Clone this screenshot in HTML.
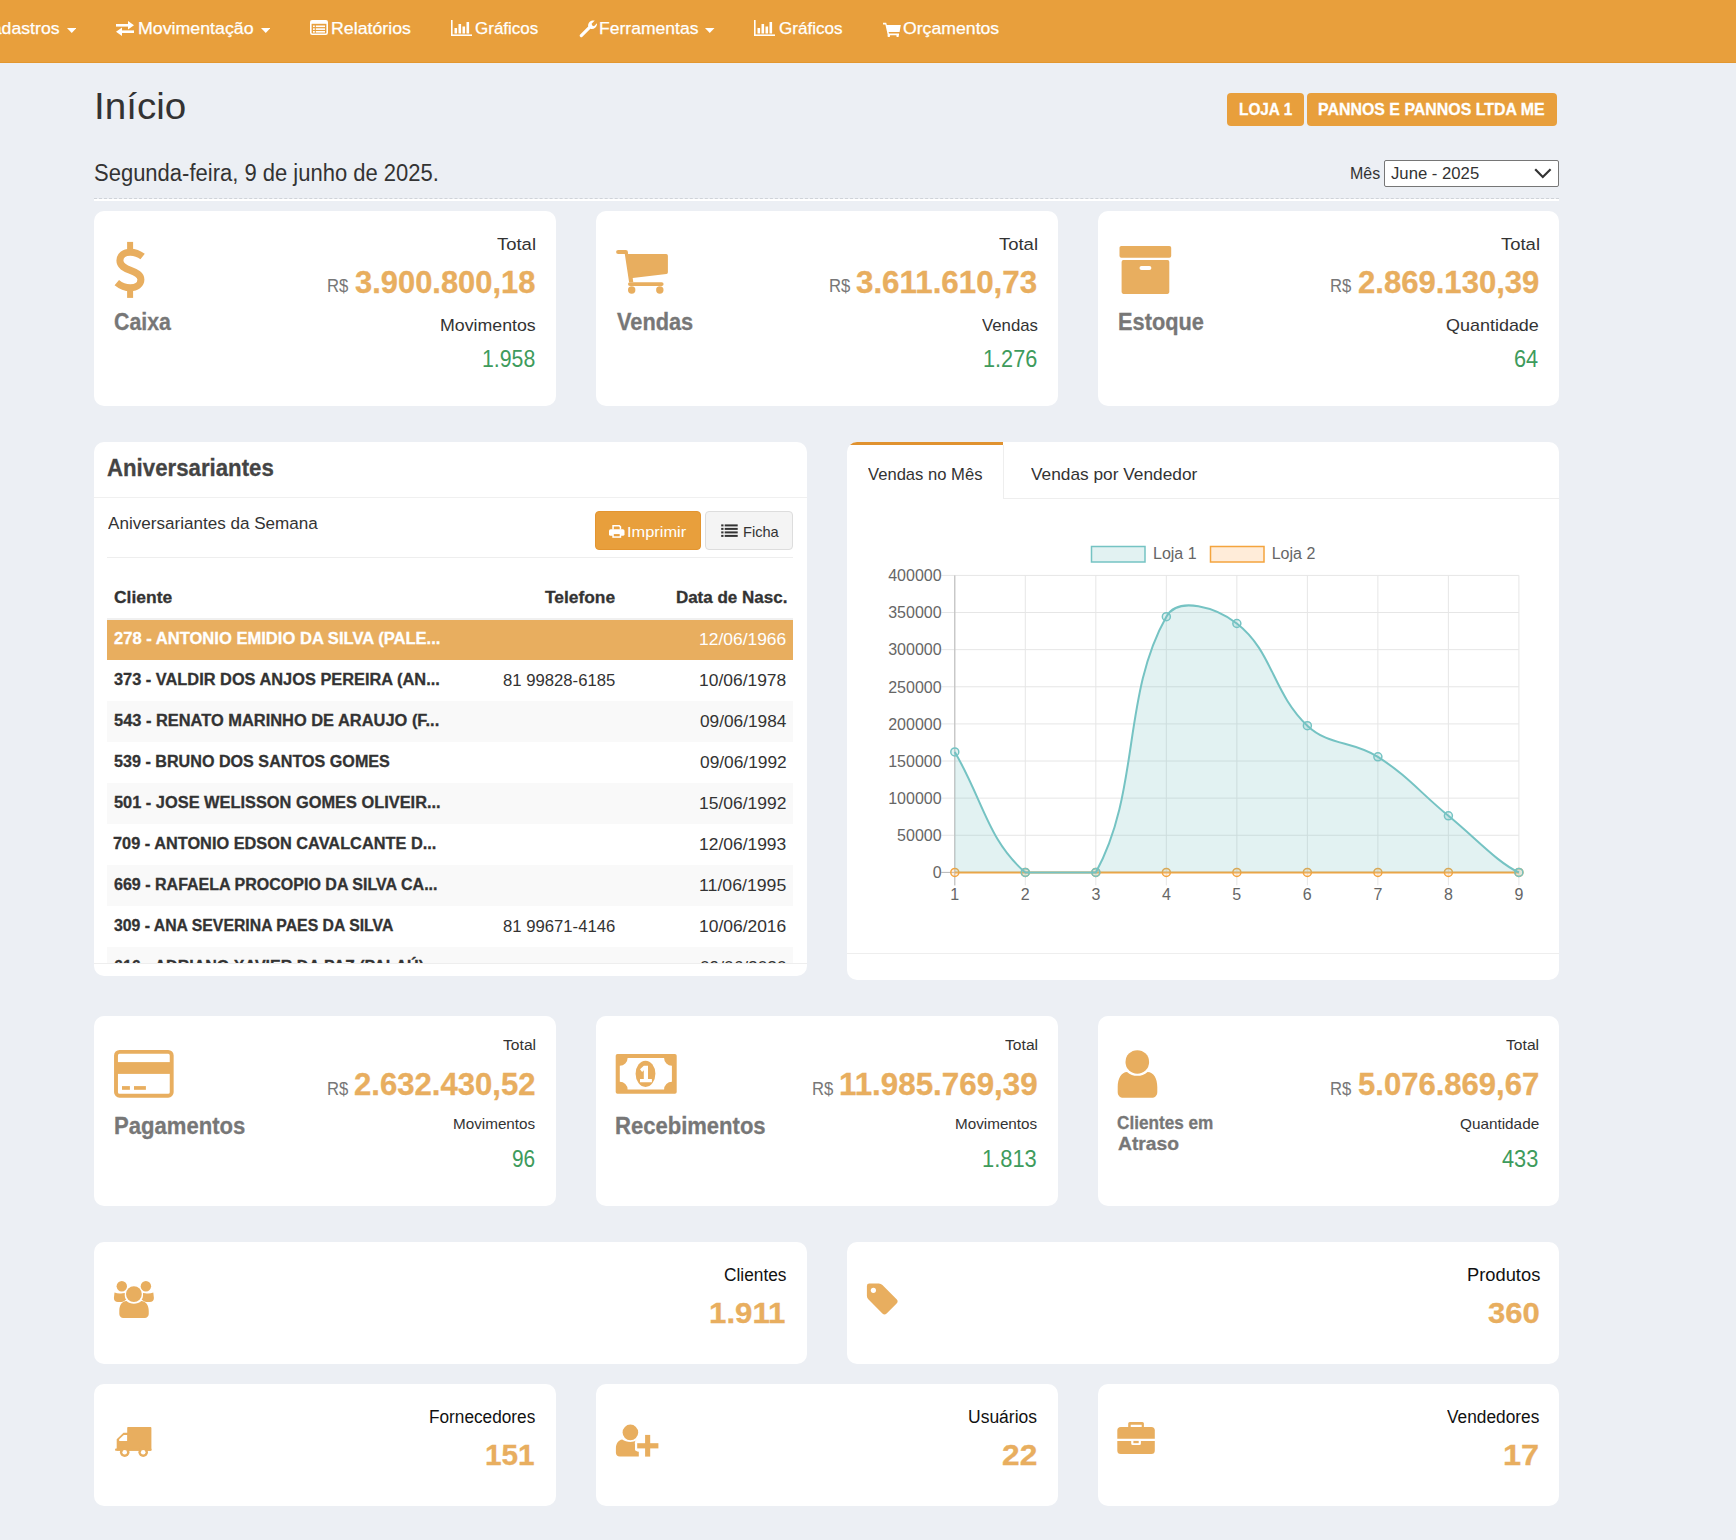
<!DOCTYPE html>
<html><head><meta charset="utf-8"><title>Início</title>
<style>
html,body{margin:0;padding:0;}
body{width:1736px;height:1540px;overflow:hidden;background:#ECEFF4;font-family:"Liberation Sans", sans-serif;position:relative;}
</style></head><body>
<div style="position:absolute;left:0px;top:0px;width:1736px;height:62px;background:#E89F3C;"></div><div style="position:absolute;left:0px;top:62px;width:1736px;height:1px;background:#E3972F;"></div><svg style="position:absolute;left:66.5px;top:28px;" width="9.5" height="5" viewBox="0 0 9.5 5"><polygon points="0,0 9.5,0 4.75,5" fill="#fff"/></svg><svg style="position:absolute;left:115px;top:21px;" width="20" height="15" viewBox="0 0 20 15"><g fill="#fff"><rect x="1" y="3" width="14" height="2.6"/><polygon points="13,0 19,4.3 13,8.6"/><rect x="5" y="9.4" width="14" height="2.6"/><polygon points="7,6.4 1,10.7 7,15"/></g></svg><svg style="position:absolute;left:260.5px;top:28px;" width="9.5" height="5" viewBox="0 0 9.5 5"><polygon points="0,0 9.5,0 4.75,5" fill="#fff"/></svg><svg style="position:absolute;left:310px;top:20px;" width="18" height="15" viewBox="0 0 18 15"><g fill="none" stroke="#fff" stroke-width="1.6"><rect x="0.8" y="0.8" width="16.4" height="13.4" rx="1.5"/></g><g fill="#fff"><rect x="0.8" y="0.8" width="16.4" height="3"/><rect x="3" y="5.5" width="1.8" height="1.6"/><rect x="3" y="8.3" width="1.8" height="1.6"/><rect x="3" y="11" width="1.8" height="1.6"/><rect x="5.8" y="5.5" width="9.2" height="1.6"/><rect x="5.8" y="8.3" width="9.2" height="1.6"/><rect x="5.8" y="11" width="9.2" height="1.6"/></g></svg><svg style="position:absolute;left:450.8px;top:20px;" width="21" height="16" viewBox="0 0 21 16"><g fill="#fff"><rect x="0" y="0" width="1.6" height="16"/><rect x="0" y="14.4" width="21" height="1.6"/><rect x="3.5" y="8" width="2.6" height="5.5"/><rect x="7.5" y="4" width="2.6" height="9.5"/><rect x="11.5" y="6.5" width="2.6" height="7"/><rect x="15.5" y="2" width="2.6" height="11.5"/></g></svg><svg style="position:absolute;left:579px;top:20px;" width="18" height="18" viewBox="0 0 18 18"><g fill="#fff"><path d="M1.2,14.6 L9.2,6.6 A5.2,5.2 0 0 1 15.8,0.6 L12.6,3.8 L13.2,5.6 L15,6.2 L18,3.2 A5.2,5.2 0 0 1 11.4,8.8 L3.4,16.8 A1.55,1.55 0 0 1 1.2,14.6 Z"/></g></svg><svg style="position:absolute;left:705px;top:28px;" width="9.5" height="5" viewBox="0 0 9.5 5"><polygon points="0,0 9.5,0 4.75,5" fill="#fff"/></svg><svg style="position:absolute;left:754px;top:20px;" width="21" height="16" viewBox="0 0 21 16"><g fill="#fff"><rect x="0" y="0" width="1.6" height="16"/><rect x="0" y="14.4" width="21" height="1.6"/><rect x="3.5" y="8" width="2.6" height="5.5"/><rect x="7.5" y="4" width="2.6" height="9.5"/><rect x="11.5" y="6.5" width="2.6" height="7"/><rect x="15.5" y="2" width="2.6" height="11.5"/></g></svg><svg style="position:absolute;left:882.5px;top:21.5px;" width="18" height="15" viewBox="0 0 18 15"><g fill="#fff"><path d="M0,0.8 h3.2 l0.6,2.2 h14 l-1.2,7 h-11 l0.4,1.6 h10 v1.6 h-11.2 l-2.4,-10.8 h-2.4 z"/><circle cx="5.8" cy="13.8" r="1.3"/><circle cx="14.6" cy="13.8" r="1.3"/></g></svg><div style="position:absolute;left:1227px;top:93px;width:77px;height:33px;background:#E89F3C;border-radius:4px"></div><div style="position:absolute;left:1307px;top:93px;width:250px;height:33px;background:#E89F3C;border-radius:4px"></div><div style="position:absolute;left:1384px;top:160px;width:173px;height:25px;border:1px solid #767676;border-radius:2px;background:#fff"></div><svg style="position:absolute;left:1534px;top:168px;" width="18" height="11" viewBox="0 0 18 11"><polyline points="1.2,1.2 8.8,9 16.6,1.2" fill="none" stroke="#333" stroke-width="2.2"/></svg><div style="position:absolute;left:94px;top:198px;width:1465px;height:0;border-top:1px dashed #cfd3d9"></div><div style="position:absolute;left:94px;top:199px;width:1465px;height:2px;background:#ffffff;"></div><div style="position:absolute;left:94px;top:211px;width:462px;height:195px;background:#fff;border-radius:10px"></div><div style="position:absolute;left:596px;top:211px;width:462px;height:195px;background:#fff;border-radius:10px"></div><div style="position:absolute;left:1098px;top:211px;width:461px;height:195px;background:#fff;border-radius:10px"></div><div style="position:absolute;left:94px;top:1016px;width:462px;height:190px;background:#fff;border-radius:10px"></div><div style="position:absolute;left:596px;top:1016px;width:462px;height:190px;background:#fff;border-radius:10px"></div><div style="position:absolute;left:1098px;top:1016px;width:461px;height:190px;background:#fff;border-radius:10px"></div><svg style="position:absolute;left:105px;top:235px;" width="80" height="70" viewBox="0 0 80 70"><g fill="#E8AE5F"><rect x="22.1" y="6.9" width="6" height="8"/><rect x="22.1" y="55" width="6" height="7.9"/></g><path d="M37.6,21.6 C33.8,18.6 29.6,17.2 25.3,17.2 C19.2,17.2 14.9,20.6 14.9,25.6 C14.9,31 19.5,33.2 25.5,35.4 C31.6,37.7 35.9,39.8 35.9,44.6 C35.9,49.6 31.5,52.8 25.3,52.8 C20.5,52.8 15.8,50.9 11.8,47.6" fill="none" stroke="#E8AE5F" stroke-width="7"/></svg><svg style="position:absolute;left:605px;top:240px;" width="80" height="60" viewBox="0 0 80 60"><g fill="#E8AE5F"><rect x="11.1" y="9.9" width="11.8" height="4.2" rx="2.1"/><path d="M19.5,12 L22.7,12 L23.1,14.1 H61.2 A1.7,1.7 0 0 1 62.9,15.8 V32.2 A1.7,1.7 0 0 1 61.4,33.9 L27.7,37.9 L28.3,42.3 H24.1 Z"/><rect x="23" y="42.2" width="35.6" height="3.8" rx="1.9"/><circle cx="26.7" cy="50" r="3.7"/><circle cx="54.8" cy="50" r="3.7"/></g></svg><svg style="position:absolute;left:1110px;top:235px;" width="70" height="65" viewBox="0 0 70 65"><g fill="#E8AE5F"><rect x="9.5" y="11" width="51.7" height="11.8" rx="1.8"/><rect x="11.6" y="25.1" width="47.7" height="33.8" rx="1.8"/></g><rect x="29.5" y="31" width="11.9" height="4" rx="2" fill="#fff"/></svg><svg style="position:absolute;left:105px;top:1040px;" width="80" height="65" viewBox="0 0 80 65"><rect x="11" y="11.9" width="55.7" height="43.8" rx="3.5" fill="none" stroke="#E8AE5F" stroke-width="3.9"/><g fill="#E8AE5F"><rect x="10" y="22.1" width="58" height="11.8"/><rect x="17" y="46.1" width="7.9" height="3.7"/><rect x="29" y="46.1" width="11.9" height="3.7"/></g></svg><svg style="position:absolute;left:605px;top:1045px;" width="80" height="55" viewBox="0 0 80 55"><path fill="#E8AE5F" fill-rule="evenodd" d="M12.5,9 h57.4 a1.8,1.8 0 0 1 1.8,1.8 v36.2 a1.8,1.8 0 0 1 -1.8,1.8 h-57.4 a1.8,1.8 0 0 1 -1.8,-1.8 v-36.2 a1.8,1.8 0 0 1 1.8,-1.8 z M22.6,13 a7.8,7.8 0 0 1 -7.8,7.8 v15.9 a7.8,7.8 0 0 1 7.8,7.8 h36.5 a7.8,7.8 0 0 1 7.8,-7.8 v-15.9 a7.8,7.8 0 0 1 -7.8,-7.8 z"/><ellipse cx="40.5" cy="28.8" rx="9.9" ry="13.1" fill="#E8AE5F"/><path fill="#fff" d="M35,24.2 l3.8,-3.5 h4.2 v13.3 h3.9 v3.2 h-11.9 v-3.2 h3.8 v-8.7 l-1.7,1.6 z"/></svg><svg style="position:absolute;left:1105px;top:1040px;" width="65" height="65" viewBox="0 0 65 65"><g fill="#E8AE5F"><circle cx="32.3" cy="21.95" r="11.8"/><path d="M22,31.9 C25,34.5 28.5,35.8 32.3,35.8 C36.1,35.8 39.6,34.5 42.6,31.9 C48.5,32.2 52.3,38 52.3,47 V52 C52.3,55.5 50,57.8 46.5,57.8 H18.5 C15,57.8 12.7,55.5 12.7,52 V47 C12.7,38 16.5,32.2 22,31.9 Z"/></g></svg><div style="position:absolute;left:94px;top:1242px;width:713px;height:122px;background:#fff;border-radius:10px"></div><div style="position:absolute;left:847px;top:1242px;width:712px;height:122px;background:#fff;border-radius:10px"></div><div style="position:absolute;left:94px;top:1384px;width:462px;height:122px;background:#fff;border-radius:10px"></div><div style="position:absolute;left:596px;top:1384px;width:462px;height:122px;background:#fff;border-radius:10px"></div><div style="position:absolute;left:1098px;top:1384px;width:461px;height:122px;background:#fff;border-radius:10px"></div><svg style="position:absolute;left:105px;top:1270px;" width="60" height="55" viewBox="0 0 60 55"><g fill="#E8AE5F"><circle cx="16.8" cy="16.25" r="5.2"/><circle cx="40.9" cy="16.25" r="5.2"/><path d="M9.5,22.4 C12,23.4 14.5,23.6 17.5,23.2 L19.8,23 C19.5,26.5 20.3,29 21.2,29.6 L20,30.6 C18.5,31.8 17,32.1 15,32.1 H13 C10.5,32.1 8.9,30.5 8.9,28 Z"/><path d="M48.3,22.4 C45.8,23.4 43.3,23.6 40.3,23.2 L38,23 C38.3,26.5 37.5,29 36.6,29.6 L37.8,30.6 C39.3,31.8 40.8,32.1 42.8,32.1 H44.8 C47.3,32.1 48.9,30.5 48.9,28 Z"/><circle cx="28.9" cy="24.1" r="7.9"/><path d="M21.5,31.1 C23.5,32.8 26,33.8 28.9,33.8 C31.8,33.8 34.3,32.8 36.3,31.1 C40.8,31.5 43.75,35 43.75,41 V44 C43.75,46.3 42,48 39.7,48 H18.3 C16,48 14.3,46.3 14.3,44 V41 C14.3,35 17,31.5 21.5,31.1 Z"/></g></svg><svg style="position:absolute;left:858px;top:1275px;" width="50" height="50" viewBox="0 0 50 50"><path fill="#E8AE5F" d="M8.9,11 a2.4,2.4 0 0 1 2.4,-2.4 h9.5 a5,5 0 0 1 3.6,1.5 l14.2,14.2 a3,3 0 0 1 0,4.2 l-10,10 a3,3 0 0 1 -4.2,0 l-14.1,-14.3 a5,5 0 0 1 -1.4,-3.5 z"/><circle cx="15.4" cy="15.3" r="2.6" fill="#fff"/></svg><svg style="position:absolute;left:90px;top:1390px;" width="80" height="80" viewBox="0 0 80 80"><g fill="#E8AE5F"><rect x="37.2" y="37.1" width="24.2" height="23.6" rx="0.8"/><path d="M26.7,60.7 V49.2 L33.5,42.7 H39 V60.7 Z"/><rect x="25.2" y="58.6" width="36.2" height="2.2" rx="0.6"/><circle cx="34.7" cy="62.2" r="4.8"/><circle cx="53.2" cy="62.2" r="4.8"/></g><g fill="#fff"><path d="M29.2,50.9 V49.3 L33.8,44.9 H37.1 V50.9 Z"/><circle cx="34.7" cy="62.2" r="2.3"/><circle cx="53.2" cy="62.2" r="2.3"/></g></svg><svg style="position:absolute;left:590px;top:1390px;" width="80" height="80" viewBox="0 0 80 80"><g fill="#E8AE5F"><circle cx="40.4" cy="42.4" r="7.8"/><path d="M32.2,49.6 C34.4,51.2 37.2,52 40.4,52 C42.6,52 44.8,51.5 46.6,50.6 C44.2,51.6 45,53.5 45,54.5 V58.8 C45,60.6 46.4,61.6 48.8,61.8 V66.6 H29.8 C27.5,66.6 25.9,65 25.9,62.8 V58.5 C25.9,53.5 28.5,50.2 32.2,49.6 Z"/></g><g fill="#fff"><rect x="45.2" y="51.2" width="25" height="9.2"/><rect x="53.1" y="42.9" width="9.1" height="25.7"/></g><g fill="#E8AE5F"><rect x="47.2" y="53.2" width="21.2" height="5.2"/><rect x="55.1" y="44.9" width="5.1" height="21.7"/></g></svg><svg style="position:absolute;left:1090px;top:1390px;" width="80" height="80" viewBox="0 0 80 80"><g fill="#E8AE5F"><path fill-rule="evenodd" d="M38.2,33.4 A1.5,1.5 0 0 1 39.7,31.9 H52.4 A1.5,1.5 0 0 1 53.9,33.4 V37.4 H51.7 V34.7 H40.7 V37.4 H38.2 Z"/><path d="M27.3,40.6 A3.5,3.5 0 0 1 30.8,37.1 H61.3 A3.5,3.5 0 0 1 64.8,40.6 V48.7 H27.3 Z"/><path d="M27.3,50.9 H41.2 V53.6 A1.5,1.5 0 0 0 42.7,55.1 H49.4 A1.5,1.5 0 0 0 50.9,53.6 V50.9 H64.8 V60.5 A3.5,3.5 0 0 1 61.3,64 H30.8 A3.5,3.5 0 0 1 27.3,60.5 Z"/><rect x="43.4" y="50.9" width="5.3" height="2.3"/></g></svg><div style="position:absolute;left:94px;top:442px;width:713px;height:534px;background:#fff;border-radius:10px;overflow:hidden"></div><div style="position:absolute;left:94px;top:497px;width:713px;height:1px;background:#f0f0f0;"></div><div style="position:absolute;left:595px;top:511px;width:104px;height:37px;background:#E89F3C;border:1px solid #E39530;border-radius:4px"></div><svg style="position:absolute;left:609px;top:525px;" width="16" height="13" viewBox="0 0 16 13"><g fill="#fff"><path d="M3.3,0 H10.6 L12.2,1.6 V4.6 H10.7 V2.2 L10,1.5 H4.8 V4.6 H3.3 Z"/><rect x="0" y="4.2" width="15.5" height="6.6" rx="1.6"/><rect x="3.3" y="7.6" width="8.9" height="5.2"/></g><rect x="4.8" y="9.1" width="5.9" height="2.2" fill="#E89F3C"/></svg><div style="position:absolute;left:705px;top:511px;width:86px;height:37px;background:#f4f4f4;border:1px solid #ddd;border-radius:4px"></div><svg style="position:absolute;left:721px;top:524px;" width="17" height="13" viewBox="0 0 17 13"><g fill="#333"><rect x="0.2" y="0.4" width="2.3" height="2"/><rect x="0.2" y="3.9" width="2.3" height="2"/><rect x="0.2" y="7.4" width="2.3" height="2"/><rect x="0.2" y="10.9" width="2.3" height="2"/><rect x="3.7" y="0.4" width="13" height="2"/><rect x="3.7" y="3.9" width="13" height="2"/><rect x="3.7" y="7.4" width="13" height="2"/><rect x="3.7" y="10.9" width="13" height="2"/></g></svg><div style="position:absolute;left:107px;top:557px;width:686px;height:1px;background:#eeeeee;"></div><div style="position:absolute;left:107px;top:618px;width:686px;height:2px;background:#f0f0f0;"></div><div style="position:absolute;left:107px;top:620px;width:686px;height:344px;overflow:hidden"><div style="position:absolute;left:0;top:0px;width:686px;height:40px;background:#E8AE5F"></div><div style="position:absolute;left:0;top:40px;width:686px;height:41px;background:#fff"></div><div style="position:absolute;left:0;top:81px;width:686px;height:41px;background:#f9f9f9"></div><div style="position:absolute;left:0;top:122px;width:686px;height:41px;background:#fff"></div><div style="position:absolute;left:0;top:163px;width:686px;height:41px;background:#f9f9f9"></div><div style="position:absolute;left:0;top:204px;width:686px;height:41px;background:#fff"></div><div style="position:absolute;left:0;top:245px;width:686px;height:41px;background:#f9f9f9"></div><div style="position:absolute;left:0;top:286px;width:686px;height:41px;background:#fff"></div><div style="position:absolute;left:0;top:327px;width:686px;height:41px;background:#f9f9f9"></div><div style="position:absolute;left:6.60px;top:11.20px;font-size:16.8px;line-height:16.8px;font-weight:700;color:#fff;white-space:nowrap;transform:scaleX(0.9871);transform-origin:0 0;-webkit-text-stroke:0.3px #fff;">278 - ANTONIO EMIDIO DA SILVA (PALE...</div><div style="position:absolute;left:592.38px;top:10.70px;font-size:17px;line-height:17px;font-weight:400;color:#fff;white-space:nowrap;transform:scaleX(1.0255);transform-origin:0 0;">12/06/1966</div><div style="position:absolute;left:6.77px;top:52.20px;font-size:16.8px;line-height:16.8px;font-weight:700;color:#333333;white-space:nowrap;transform:scaleX(0.9750);transform-origin:0 0;-webkit-text-stroke:0.3px #333333;">373 - VALDIR DOS ANJOS PEREIRA (AN...</div><div style="position:absolute;left:396.33px;top:51.70px;font-size:17px;line-height:17px;font-weight:400;color:#333333;white-space:nowrap;transform:scaleX(0.9815);transform-origin:0 0;">81 99828-6185</div><div style="position:absolute;left:592.38px;top:51.70px;font-size:17px;line-height:17px;font-weight:400;color:#333333;white-space:nowrap;transform:scaleX(1.0255);transform-origin:0 0;">10/06/1978</div><div style="position:absolute;left:6.61px;top:93.20px;font-size:16.8px;line-height:16.8px;font-weight:700;color:#333333;white-space:nowrap;transform:scaleX(0.9780);transform-origin:0 0;-webkit-text-stroke:0.3px #333333;">543 - RENATO MARINHO DE ARAUJO (F...</div><div style="position:absolute;left:593.08px;top:92.70px;font-size:17px;line-height:17px;font-weight:400;color:#333333;white-space:nowrap;transform:scaleX(1.0151);transform-origin:0 0;">09/06/1984</div><div style="position:absolute;left:6.62px;top:134.20px;font-size:16.8px;line-height:16.8px;font-weight:700;color:#333333;white-space:nowrap;transform:scaleX(0.9616);transform-origin:0 0;-webkit-text-stroke:0.3px #333333;">539 - BRUNO DOS SANTOS GOMES</div><div style="position:absolute;left:593.08px;top:133.70px;font-size:17px;line-height:17px;font-weight:400;color:#333333;white-space:nowrap;transform:scaleX(1.0192);transform-origin:0 0;">09/06/1992</div><div style="position:absolute;left:6.61px;top:175.20px;font-size:16.8px;line-height:16.8px;font-weight:700;color:#333333;white-space:nowrap;transform:scaleX(0.9757);transform-origin:0 0;-webkit-text-stroke:0.3px #333333;">501 - JOSE WELISSON GOMES OLIVEIR...</div><div style="position:absolute;left:592.38px;top:174.70px;font-size:17px;line-height:17px;font-weight:400;color:#333333;white-space:nowrap;transform:scaleX(1.0276);transform-origin:0 0;">15/06/1992</div><div style="position:absolute;left:6.45px;top:216.20px;font-size:16.8px;line-height:16.8px;font-weight:700;color:#333333;white-space:nowrap;transform:scaleX(0.9731);transform-origin:0 0;-webkit-text-stroke:0.3px #333333;">709 - ANTONIO EDSON CAVALCANTE D...</div><div style="position:absolute;left:592.38px;top:215.70px;font-size:17px;line-height:17px;font-weight:400;color:#333333;white-space:nowrap;transform:scaleX(1.0255);transform-origin:0 0;">12/06/1993</div><div style="position:absolute;left:6.62px;top:257.20px;font-size:16.8px;line-height:16.8px;font-weight:700;color:#333333;white-space:nowrap;transform:scaleX(0.9550);transform-origin:0 0;-webkit-text-stroke:0.3px #333333;">669 - RAFAELA PROCOPIO DA SILVA CA...</div><div style="position:absolute;left:592.36px;top:256.70px;font-size:17px;line-height:17px;font-weight:400;color:#333333;white-space:nowrap;transform:scaleX(1.0413);transform-origin:0 0;">11/06/1995</div><div style="position:absolute;left:6.78px;top:298.20px;font-size:16.8px;line-height:16.8px;font-weight:700;color:#333333;white-space:nowrap;transform:scaleX(0.9410);transform-origin:0 0;-webkit-text-stroke:0.3px #333333;">309 - ANA SEVERINA PAES DA SILVA</div><div style="position:absolute;left:396.33px;top:297.70px;font-size:17px;line-height:17px;font-weight:400;color:#333333;white-space:nowrap;transform:scaleX(0.9815);transform-origin:0 0;">81 99671-4146</div><div style="position:absolute;left:592.38px;top:297.70px;font-size:17px;line-height:17px;font-weight:400;color:#333333;white-space:nowrap;transform:scaleX(1.0255);transform-origin:0 0;">10/06/2016</div><div style="position:absolute;left:6.62px;top:339.20px;font-size:16.8px;line-height:16.8px;font-weight:700;color:#333333;white-space:nowrap;transform:scaleX(0.9565);transform-origin:0 0;-webkit-text-stroke:0.3px #333333;">616 - ADRIANO XAVIER DA PAZ (PALAÚ)</div><div style="position:absolute;left:593.08px;top:338.70px;font-size:17px;line-height:17px;font-weight:400;color:#333333;white-space:nowrap;transform:scaleX(1.0172);transform-origin:0 0;">09/06/2020</div></div><div style="position:absolute;left:94px;top:963px;width:713px;height:1px;background:#eeeeee;"></div><div style="position:absolute;left:847px;top:442px;width:712px;height:538px;background:#fff;border-radius:10px;overflow:hidden"><div style="position:absolute;left:0;top:0;width:156px;height:3px;background:#E0922F"></div></div><div style="position:absolute;left:1003px;top:445px;width:1px;height:54px;background:#eeeeee;"></div><div style="position:absolute;left:1003px;top:498px;width:556px;height:1px;background:#eeeeee;"></div><div style="position:absolute;left:847px;top:953px;width:712px;height:1px;background:#eeeeee;"></div><svg style="position:absolute;left:0;top:0" width="1736" height="1540" viewBox="0 0 1736 1540"><line x1="941.3" y1="575.40" x2="1518.9" y2="575.40" stroke="#e6e6e6" stroke-width="1"/><line x1="941.3" y1="612.52" x2="1518.9" y2="612.52" stroke="#e6e6e6" stroke-width="1"/><line x1="941.3" y1="649.65" x2="1518.9" y2="649.65" stroke="#e6e6e6" stroke-width="1"/><line x1="941.3" y1="686.77" x2="1518.9" y2="686.77" stroke="#e6e6e6" stroke-width="1"/><line x1="941.3" y1="723.90" x2="1518.9" y2="723.90" stroke="#e6e6e6" stroke-width="1"/><line x1="941.3" y1="761.02" x2="1518.9" y2="761.02" stroke="#e6e6e6" stroke-width="1"/><line x1="941.3" y1="798.15" x2="1518.9" y2="798.15" stroke="#e6e6e6" stroke-width="1"/><line x1="941.3" y1="835.27" x2="1518.9" y2="835.27" stroke="#e6e6e6" stroke-width="1"/><line x1="941.3" y1="872.40" x2="1518.9" y2="872.40" stroke="#e6e6e6" stroke-width="1"/><line x1="954.80" y1="575.4" x2="954.80" y2="885.4" stroke="#e6e6e6" stroke-width="1"/><line x1="1025.31" y1="575.4" x2="1025.31" y2="885.4" stroke="#e6e6e6" stroke-width="1"/><line x1="1095.83" y1="575.4" x2="1095.83" y2="885.4" stroke="#e6e6e6" stroke-width="1"/><line x1="1166.34" y1="575.4" x2="1166.34" y2="885.4" stroke="#e6e6e6" stroke-width="1"/><line x1="1236.85" y1="575.4" x2="1236.85" y2="885.4" stroke="#e6e6e6" stroke-width="1"/><line x1="1307.36" y1="575.4" x2="1307.36" y2="885.4" stroke="#e6e6e6" stroke-width="1"/><line x1="1377.88" y1="575.4" x2="1377.88" y2="885.4" stroke="#e6e6e6" stroke-width="1"/><line x1="1448.39" y1="575.4" x2="1448.39" y2="885.4" stroke="#e6e6e6" stroke-width="1"/><line x1="1518.90" y1="575.4" x2="1518.90" y2="885.4" stroke="#e6e6e6" stroke-width="1"/><line x1="954.8" y1="575.4" x2="954.8" y2="885.4" stroke="#b8b8b8" stroke-width="1"/><line x1="941.3" y1="872.4" x2="1518.9" y2="872.4" stroke="#b8b8b8" stroke-width="1"/><line x1="954.8" y1="872.4" x2="1518.9" y2="872.4" stroke="#F4A43E" stroke-width="2"/><circle cx="954.80" cy="872.4" r="4" fill="rgba(255,200,140,0.25)" stroke="#F4A43E" stroke-width="1.5"/><circle cx="1025.31" cy="872.4" r="4" fill="rgba(255,200,140,0.25)" stroke="#F4A43E" stroke-width="1.5"/><circle cx="1095.83" cy="872.4" r="4" fill="rgba(255,200,140,0.25)" stroke="#F4A43E" stroke-width="1.5"/><circle cx="1166.34" cy="872.4" r="4" fill="rgba(255,200,140,0.25)" stroke="#F4A43E" stroke-width="1.5"/><circle cx="1236.85" cy="872.4" r="4" fill="rgba(255,200,140,0.25)" stroke="#F4A43E" stroke-width="1.5"/><circle cx="1307.36" cy="872.4" r="4" fill="rgba(255,200,140,0.25)" stroke="#F4A43E" stroke-width="1.5"/><circle cx="1377.88" cy="872.4" r="4" fill="rgba(255,200,140,0.25)" stroke="#F4A43E" stroke-width="1.5"/><circle cx="1448.39" cy="872.4" r="4" fill="rgba(255,200,140,0.25)" stroke="#F4A43E" stroke-width="1.5"/><circle cx="1518.90" cy="872.4" r="4" fill="rgba(255,200,140,0.25)" stroke="#F4A43E" stroke-width="1.5"/><path d="M954.80,751.97 C983.00,800.14 987.84,840.40 1025.31,872.40 C1044.25,872.40 1083.98,872.40 1095.83,872.40 C1140.39,791.59 1121.82,695.25 1166.34,616.68 C1178.23,595.70 1216.35,607.67 1236.85,623.51 C1272.76,651.27 1272.56,692.78 1307.36,725.68 C1328.97,746.12 1352.14,740.42 1377.88,756.87 C1408.55,776.47 1419.95,792.52 1448.39,815.82 C1476.36,838.74 1498.00,863.00 1518.90,872.40 L1518.9,872.4 L954.8,872.4 Z" fill="rgba(108,192,192,0.2)"/><path d="M954.80,751.97 C983.00,800.14 987.84,840.40 1025.31,872.40 C1044.25,872.40 1083.98,872.40 1095.83,872.40 C1140.39,791.59 1121.82,695.25 1166.34,616.68 C1178.23,595.70 1216.35,607.67 1236.85,623.51 C1272.76,651.27 1272.56,692.78 1307.36,725.68 C1328.97,746.12 1352.14,740.42 1377.88,756.87 C1408.55,776.47 1419.95,792.52 1448.39,815.82 C1476.36,838.74 1498.00,863.00 1518.90,872.40" fill="none" stroke="#75C3C3" stroke-width="2"/><circle cx="954.80" cy="751.97" r="4" fill="rgba(108,192,192,0.2)" stroke="#75C3C3" stroke-width="1.5"/><circle cx="1025.31" cy="872.40" r="4" fill="rgba(108,192,192,0.2)" stroke="#75C3C3" stroke-width="1.5"/><circle cx="1095.83" cy="872.40" r="4" fill="rgba(108,192,192,0.2)" stroke="#75C3C3" stroke-width="1.5"/><circle cx="1166.34" cy="616.68" r="4" fill="rgba(108,192,192,0.2)" stroke="#75C3C3" stroke-width="1.5"/><circle cx="1236.85" cy="623.51" r="4" fill="rgba(108,192,192,0.2)" stroke="#75C3C3" stroke-width="1.5"/><circle cx="1307.36" cy="725.68" r="4" fill="rgba(108,192,192,0.2)" stroke="#75C3C3" stroke-width="1.5"/><circle cx="1377.88" cy="756.87" r="4" fill="rgba(108,192,192,0.2)" stroke="#75C3C3" stroke-width="1.5"/><circle cx="1448.39" cy="815.82" r="4" fill="rgba(108,192,192,0.2)" stroke="#75C3C3" stroke-width="1.5"/><circle cx="1518.90" cy="872.40" r="4" fill="rgba(108,192,192,0.2)" stroke="#75C3C3" stroke-width="1.5"/><rect x="1091.5" y="546.5" width="53.5" height="15.5" fill="rgba(108,192,192,0.2)" stroke="#75C3C3" stroke-width="1.5"/><rect x="1210.5" y="546.5" width="53.5" height="15.5" fill="rgba(255,159,64,0.2)" stroke="#F4A43E" stroke-width="1.5"/></svg>
<div style="position:absolute;left:-21.28px;top:21.20px;font-size:16.9px;line-height:16.9px;font-weight:400;color:#fff;white-space:nowrap;transform:scaleX(1.0466);transform-origin:0 0;-webkit-text-stroke:0.25px #fff;">Cadastros</div><div style="position:absolute;left:137.58px;top:21.20px;font-size:16.9px;line-height:16.9px;font-weight:400;color:#fff;white-space:nowrap;transform:scaleX(1.0525);transform-origin:0 0;-webkit-text-stroke:0.25px #fff;">Movimentação</div><div style="position:absolute;left:330.88px;top:21.20px;font-size:16.9px;line-height:16.9px;font-weight:400;color:#fff;white-space:nowrap;transform:scaleX(1.0522);transform-origin:0 0;-webkit-text-stroke:0.25px #fff;">Relatórios</div><div style="position:absolute;left:475.45px;top:21.20px;font-size:16.9px;line-height:16.9px;font-weight:400;color:#fff;white-space:nowrap;transform:scaleX(1.0070);transform-origin:0 0;-webkit-text-stroke:0.25px #fff;">Gráficos</div><div style="position:absolute;left:598.60px;top:21.20px;font-size:16.9px;line-height:16.9px;font-weight:400;color:#fff;white-space:nowrap;transform:scaleX(1.0390);transform-origin:0 0;-webkit-text-stroke:0.25px #fff;">Ferramentas</div><div style="position:absolute;left:778.84px;top:21.20px;font-size:16.9px;line-height:16.9px;font-weight:400;color:#fff;white-space:nowrap;transform:scaleX(1.0119);transform-origin:0 0;-webkit-text-stroke:0.25px #fff;">Gráficos</div><div style="position:absolute;left:903.29px;top:21.20px;font-size:16.9px;line-height:16.9px;font-weight:400;color:#fff;white-space:nowrap;transform:scaleX(1.0456);transform-origin:0 0;-webkit-text-stroke:0.25px #fff;">Orçamentos</div><div style="position:absolute;left:93.53px;top:87.80px;font-size:37.4px;line-height:37.4px;font-weight:400;color:#333333;white-space:nowrap;transform:scaleX(1.0322);transform-origin:0 0;">Início</div><div style="position:absolute;left:1238.58px;top:101.00px;font-size:17.3px;line-height:17.3px;font-weight:700;color:#fff;white-space:nowrap;transform:scaleX(0.8887);transform-origin:0 0;-webkit-text-stroke:0.3px #fff;">LOJA 1</div><div style="position:absolute;left:1318.04px;top:101.00px;font-size:17.3px;line-height:17.3px;font-weight:700;color:#fff;white-space:nowrap;transform:scaleX(0.9212);transform-origin:0 0;-webkit-text-stroke:0.3px #fff;">PANNOS E PANNOS LTDA ME</div><div style="position:absolute;left:93.72px;top:162.10px;font-size:23px;line-height:23px;font-weight:400;color:#333333;white-space:nowrap;transform:scaleX(0.9564);transform-origin:0 0;">Segunda-feira, 9 de junho de 2025.</div><div style="position:absolute;left:1350.02px;top:165.40px;font-size:17px;line-height:17px;font-weight:400;color:#333333;white-space:nowrap;transform:scaleX(0.9390);transform-origin:0 0;">Mês</div><div style="position:absolute;left:1390.83px;top:165.40px;font-size:17px;line-height:17px;font-weight:400;color:#333333;white-space:nowrap;transform:scaleX(0.9820);transform-origin:0 0;">June - 2025</div><div style="position:absolute;left:497.33px;top:235.60px;font-size:17.2px;line-height:17.2px;font-weight:400;color:#333333;white-space:nowrap;transform:scaleX(1.0739);transform-origin:0 0;">Total</div><div style="position:absolute;left:327.47px;top:276.40px;font-size:19px;line-height:19px;font-weight:400;color:#777777;white-space:nowrap;transform:scaleX(0.8771);transform-origin:0 0;">R$</div><div style="position:absolute;left:354.98px;top:267.30px;font-size:30.5px;line-height:30.5px;font-weight:700;color:#E8AE5F;white-space:nowrap;transform:scaleX(1.0131);transform-origin:0 0;-webkit-text-stroke:0.3px #E8AE5F;">3.900.800,18</div><div style="position:absolute;left:439.98px;top:317.90px;font-size:16.6px;line-height:16.6px;font-weight:400;color:#333333;white-space:nowrap;transform:scaleX(1.0701);transform-origin:0 0;">Movimentos</div><div style="position:absolute;left:482.21px;top:348.00px;font-size:23px;line-height:23px;font-weight:400;color:#3E9B5C;white-space:nowrap;transform:scaleX(0.9253);transform-origin:0 0;">1.958</div><div style="position:absolute;left:114.15px;top:311.30px;font-size:23px;line-height:23px;font-weight:700;color:#777777;white-space:nowrap;transform:scaleX(0.9280);transform-origin:0 0;-webkit-text-stroke:0.3px #777777;">Caixa</div><div style="position:absolute;left:999.13px;top:235.60px;font-size:17.2px;line-height:17.2px;font-weight:400;color:#333333;white-space:nowrap;transform:scaleX(1.0739);transform-origin:0 0;">Total</div><div style="position:absolute;left:828.67px;top:276.40px;font-size:19px;line-height:19px;font-weight:400;color:#777777;white-space:nowrap;transform:scaleX(0.8771);transform-origin:0 0;">R$</div><div style="position:absolute;left:856.37px;top:267.30px;font-size:30.5px;line-height:30.5px;font-weight:700;color:#E8AE5F;white-space:nowrap;transform:scaleX(1.0270);transform-origin:0 0;-webkit-text-stroke:0.3px #E8AE5F;">3.611.610,73</div><div style="position:absolute;left:981.50px;top:317.90px;font-size:16.6px;line-height:16.6px;font-weight:400;color:#333333;white-space:nowrap;transform:scaleX(1.0112);transform-origin:0 0;">Vendas</div><div style="position:absolute;left:982.98px;top:348.00px;font-size:23px;line-height:23px;font-weight:400;color:#3E9B5C;white-space:nowrap;transform:scaleX(0.9435);transform-origin:0 0;">1.276</div><div style="position:absolute;left:617.00px;top:311.30px;font-size:23px;line-height:23px;font-weight:700;color:#777777;white-space:nowrap;transform:scaleX(0.9459);transform-origin:0 0;-webkit-text-stroke:0.3px #777777;">Vendas</div><div style="position:absolute;left:1500.63px;top:235.60px;font-size:17.2px;line-height:17.2px;font-weight:400;color:#333333;white-space:nowrap;transform:scaleX(1.0739);transform-origin:0 0;">Total</div><div style="position:absolute;left:1330.27px;top:276.40px;font-size:19px;line-height:19px;font-weight:400;color:#777777;white-space:nowrap;transform:scaleX(0.8771);transform-origin:0 0;">R$</div><div style="position:absolute;left:1357.67px;top:267.30px;font-size:30.5px;line-height:30.5px;font-weight:700;color:#E8AE5F;white-space:nowrap;transform:scaleX(1.0184);transform-origin:0 0;-webkit-text-stroke:0.3px #E8AE5F;">2.869.130,39</div><div style="position:absolute;left:1446.28px;top:317.90px;font-size:16.6px;line-height:16.6px;font-weight:400;color:#333333;white-space:nowrap;transform:scaleX(1.0819);transform-origin:0 0;">Quantidade</div><div style="position:absolute;left:1514.41px;top:348.00px;font-size:23px;line-height:23px;font-weight:400;color:#3E9B5C;white-space:nowrap;transform:scaleX(0.9441);transform-origin:0 0;">64</div><div style="position:absolute;left:1117.69px;top:311.30px;font-size:23px;line-height:23px;font-weight:700;color:#777777;white-space:nowrap;transform:scaleX(0.9465);transform-origin:0 0;-webkit-text-stroke:0.3px #777777;">Estoque</div><div style="position:absolute;left:502.99px;top:1037.30px;font-size:15.2px;line-height:15.2px;font-weight:400;color:#333333;white-space:nowrap;transform:scaleX(1.0305);transform-origin:0 0;">Total</div><div style="position:absolute;left:326.67px;top:1079.30px;font-size:19px;line-height:19px;font-weight:400;color:#777777;white-space:nowrap;transform:scaleX(0.8771);transform-origin:0 0;">R$</div><div style="position:absolute;left:354.07px;top:1069.00px;font-size:30.5px;line-height:30.5px;font-weight:700;color:#E8AE5F;white-space:nowrap;transform:scaleX(1.0195);transform-origin:0 0;-webkit-text-stroke:0.3px #E8AE5F;">2.632.430,52</div><div style="position:absolute;left:453.38px;top:1116.90px;font-size:14.5px;line-height:14.5px;font-weight:400;color:#333333;white-space:nowrap;transform:scaleX(1.0513);transform-origin:0 0;">Movimentos</div><div style="position:absolute;left:512.17px;top:1147.80px;font-size:23px;line-height:23px;font-weight:400;color:#3E9B5C;white-space:nowrap;transform:scaleX(0.9064);transform-origin:0 0;">96</div><div style="position:absolute;left:1004.69px;top:1037.30px;font-size:15.2px;line-height:15.2px;font-weight:400;color:#333333;white-space:nowrap;transform:scaleX(1.0305);transform-origin:0 0;">Total</div><div style="position:absolute;left:811.67px;top:1079.30px;font-size:19px;line-height:19px;font-weight:400;color:#777777;white-space:nowrap;transform:scaleX(0.8771);transform-origin:0 0;">R$</div><div style="position:absolute;left:838.72px;top:1069.00px;font-size:30.5px;line-height:30.5px;font-weight:700;color:#E8AE5F;white-space:nowrap;transform:scaleX(1.0271);transform-origin:0 0;-webkit-text-stroke:0.3px #E8AE5F;">11.985.769,39</div><div style="position:absolute;left:955.08px;top:1116.90px;font-size:14.5px;line-height:14.5px;font-weight:400;color:#333333;white-space:nowrap;transform:scaleX(1.0513);transform-origin:0 0;">Movimentos</div><div style="position:absolute;left:982.37px;top:1147.80px;font-size:23px;line-height:23px;font-weight:400;color:#3E9B5C;white-space:nowrap;transform:scaleX(0.9507);transform-origin:0 0;">1.813</div><div style="position:absolute;left:1506.29px;top:1037.30px;font-size:15.2px;line-height:15.2px;font-weight:400;color:#333333;white-space:nowrap;transform:scaleX(1.0305);transform-origin:0 0;">Total</div><div style="position:absolute;left:1330.27px;top:1079.30px;font-size:19px;line-height:19px;font-weight:400;color:#777777;white-space:nowrap;transform:scaleX(0.8771);transform-origin:0 0;">R$</div><div style="position:absolute;left:1357.67px;top:1069.00px;font-size:30.5px;line-height:30.5px;font-weight:700;color:#E8AE5F;white-space:nowrap;transform:scaleX(1.0178);transform-origin:0 0;-webkit-text-stroke:0.3px #E8AE5F;">5.076.869,67</div><div style="position:absolute;left:1459.79px;top:1116.90px;font-size:14.5px;line-height:14.5px;font-weight:400;color:#333333;white-space:nowrap;transform:scaleX(1.0559);transform-origin:0 0;">Quantidade</div><div style="position:absolute;left:1502.36px;top:1147.80px;font-size:23px;line-height:23px;font-weight:400;color:#3E9B5C;white-space:nowrap;transform:scaleX(0.9465);transform-origin:0 0;">433</div><div style="position:absolute;left:113.67px;top:1114.90px;font-size:23px;line-height:23px;font-weight:700;color:#777777;white-space:nowrap;transform:scaleX(0.9602);transform-origin:0 0;-webkit-text-stroke:0.3px #777777;">Pagamentos</div><div style="position:absolute;left:615.18px;top:1114.90px;font-size:23px;line-height:23px;font-weight:700;color:#777777;white-space:nowrap;transform:scaleX(0.9580);transform-origin:0 0;-webkit-text-stroke:0.3px #777777;">Recebimentos</div><div style="position:absolute;left:1117.31px;top:1115.40px;font-size:17.6px;line-height:17.6px;font-weight:700;color:#777777;white-space:nowrap;transform:scaleX(0.9758);transform-origin:0 0;-webkit-text-stroke:0.3px #777777;">Clientes em</div><div style="position:absolute;left:1117.61px;top:1135.80px;font-size:17.6px;line-height:17.6px;font-weight:700;color:#777777;white-space:nowrap;transform:scaleX(1.0938);transform-origin:0 0;-webkit-text-stroke:0.3px #777777;">Atraso</div><div style="position:absolute;left:724.04px;top:1266.90px;font-size:17.6px;line-height:17.6px;font-weight:400;color:#111;white-space:nowrap;transform:scaleX(0.9827);transform-origin:0 0;">Clientes</div><div style="position:absolute;left:709.32px;top:1298.90px;font-size:28.9px;line-height:28.9px;font-weight:700;color:#E8AE5F;white-space:nowrap;transform:scaleX(1.0815);transform-origin:0 0;-webkit-text-stroke:0.3px #E8AE5F;">1.911</div><div style="position:absolute;left:1466.53px;top:1266.90px;font-size:17.6px;line-height:17.6px;font-weight:400;color:#111;white-space:nowrap;transform:scaleX(1.0408);transform-origin:0 0;">Produtos</div><div style="position:absolute;left:1488.38px;top:1298.90px;font-size:28.9px;line-height:28.9px;font-weight:700;color:#E8AE5F;white-space:nowrap;transform:scaleX(1.0731);transform-origin:0 0;-webkit-text-stroke:0.3px #E8AE5F;">360</div><div style="position:absolute;left:429.42px;top:1409.00px;font-size:17.6px;line-height:17.6px;font-weight:400;color:#111;white-space:nowrap;transform:scaleX(0.9789);transform-origin:0 0;">Fornecedores</div><div style="position:absolute;left:485.31px;top:1440.80px;font-size:28.9px;line-height:28.9px;font-weight:700;color:#E8AE5F;white-space:nowrap;transform:scaleX(1.0300);transform-origin:0 0;-webkit-text-stroke:0.3px #E8AE5F;">151</div><div style="position:absolute;left:968.48px;top:1409.00px;font-size:17.6px;line-height:17.6px;font-weight:400;color:#111;white-space:nowrap;transform:scaleX(0.9943);transform-origin:0 0;">Usuários</div><div style="position:absolute;left:1001.85px;top:1440.80px;font-size:28.9px;line-height:28.9px;font-weight:700;color:#E8AE5F;white-space:nowrap;transform:scaleX(1.0981);transform-origin:0 0;-webkit-text-stroke:0.3px #E8AE5F;">22</div><div style="position:absolute;left:1447.00px;top:1409.00px;font-size:17.6px;line-height:17.6px;font-weight:400;color:#111;white-space:nowrap;transform:scaleX(0.9827);transform-origin:0 0;">Vendedores</div><div style="position:absolute;left:1502.85px;top:1440.80px;font-size:28.9px;line-height:28.9px;font-weight:700;color:#E8AE5F;white-space:nowrap;transform:scaleX(1.1237);transform-origin:0 0;-webkit-text-stroke:0.3px #E8AE5F;">17</div><div style="position:absolute;left:107.06px;top:457.00px;font-size:23px;line-height:23px;font-weight:700;color:#444;white-space:nowrap;transform:scaleX(0.9662);transform-origin:0 0;-webkit-text-stroke:0.3px #444;">Aniversariantes</div><div style="position:absolute;left:107.50px;top:516.00px;font-size:16.8px;line-height:16.8px;font-weight:400;color:#333333;white-space:nowrap;transform:scaleX(1.0177);transform-origin:0 0;">Aniversariantes da Semana</div><div style="position:absolute;left:627.22px;top:524.00px;font-size:15px;line-height:15px;font-weight:400;color:#fff;white-space:nowrap;transform:scaleX(1.0929);transform-origin:0 0;">Imprimir</div><div style="position:absolute;left:742.73px;top:524.00px;font-size:15px;line-height:15px;font-weight:400;color:#333;white-space:nowrap;transform:scaleX(0.9736);transform-origin:0 0;">Ficha</div><div style="position:absolute;left:113.80px;top:589.00px;font-size:17px;line-height:17px;font-weight:700;color:#333333;white-space:nowrap;transform:scaleX(1.0260);transform-origin:0 0;-webkit-text-stroke:0.3px #333333;">Cliente</div><div style="position:absolute;left:545.23px;top:589.00px;font-size:17px;line-height:17px;font-weight:700;color:#333333;white-space:nowrap;transform:scaleX(1.0217);transform-origin:0 0;-webkit-text-stroke:0.3px #333333;">Telefone</div><div style="position:absolute;left:675.88px;top:589.00px;font-size:17px;line-height:17px;font-weight:700;color:#333333;white-space:nowrap;-webkit-text-stroke:0.3px #333333;">Data de Nasc.</div><div style="position:absolute;left:868.00px;top:466.00px;font-size:17px;line-height:17px;font-weight:400;color:#333333;white-space:nowrap;transform:scaleX(0.9770);transform-origin:0 0;">Vendas no Mês</div><div style="position:absolute;left:1030.90px;top:466.00px;font-size:17px;line-height:17px;font-weight:400;color:#333333;white-space:nowrap;transform:scaleX(1.0171);transform-origin:0 0;">Vendas por Vendedor</div><div style="position:absolute;left:888.19px;top:568.20px;font-size:16px;line-height:16px;font-weight:400;color:#666;white-space:nowrap;">400000</div><div style="position:absolute;left:888.19px;top:605.32px;font-size:16px;line-height:16px;font-weight:400;color:#666;white-space:nowrap;">350000</div><div style="position:absolute;left:888.19px;top:642.45px;font-size:16px;line-height:16px;font-weight:400;color:#666;white-space:nowrap;">300000</div><div style="position:absolute;left:888.19px;top:679.57px;font-size:16px;line-height:16px;font-weight:400;color:#666;white-space:nowrap;">250000</div><div style="position:absolute;left:888.19px;top:716.70px;font-size:16px;line-height:16px;font-weight:400;color:#666;white-space:nowrap;">200000</div><div style="position:absolute;left:888.19px;top:753.82px;font-size:16px;line-height:16px;font-weight:400;color:#666;white-space:nowrap;">150000</div><div style="position:absolute;left:888.19px;top:790.95px;font-size:16px;line-height:16px;font-weight:400;color:#666;white-space:nowrap;">100000</div><div style="position:absolute;left:897.09px;top:828.07px;font-size:16px;line-height:16px;font-weight:400;color:#666;white-space:nowrap;">50000</div><div style="position:absolute;left:932.68px;top:865.20px;font-size:16px;line-height:16px;font-weight:400;color:#666;white-space:nowrap;">0</div><div style="position:absolute;left:950.16px;top:887.00px;font-size:16px;line-height:16px;font-weight:400;color:#666;white-space:nowrap;">1</div><div style="position:absolute;left:1020.83px;top:887.00px;font-size:16px;line-height:16px;font-weight:400;color:#666;white-space:nowrap;">2</div><div style="position:absolute;left:1091.42px;top:887.00px;font-size:16px;line-height:16px;font-weight:400;color:#666;white-space:nowrap;">3</div><div style="position:absolute;left:1161.94px;top:887.00px;font-size:16px;line-height:16px;font-weight:400;color:#666;white-space:nowrap;">4</div><div style="position:absolute;left:1232.37px;top:887.00px;font-size:16px;line-height:16px;font-weight:400;color:#666;white-space:nowrap;">5</div><div style="position:absolute;left:1302.80px;top:887.00px;font-size:16px;line-height:16px;font-weight:400;color:#666;white-space:nowrap;">6</div><div style="position:absolute;left:1373.39px;top:887.00px;font-size:16px;line-height:16px;font-weight:400;color:#666;white-space:nowrap;">7</div><div style="position:absolute;left:1443.91px;top:887.00px;font-size:16px;line-height:16px;font-weight:400;color:#666;white-space:nowrap;">8</div><div style="position:absolute;left:1514.50px;top:887.00px;font-size:16px;line-height:16px;font-weight:400;color:#666;white-space:nowrap;">9</div><div style="position:absolute;left:1153.02px;top:546.00px;font-size:16px;line-height:16px;font-weight:400;color:#666;white-space:nowrap;">Loja 1</div><div style="position:absolute;left:1271.72px;top:546.00px;font-size:16px;line-height:16px;font-weight:400;color:#666;white-space:nowrap;">Loja 2</div>
</body></html>
